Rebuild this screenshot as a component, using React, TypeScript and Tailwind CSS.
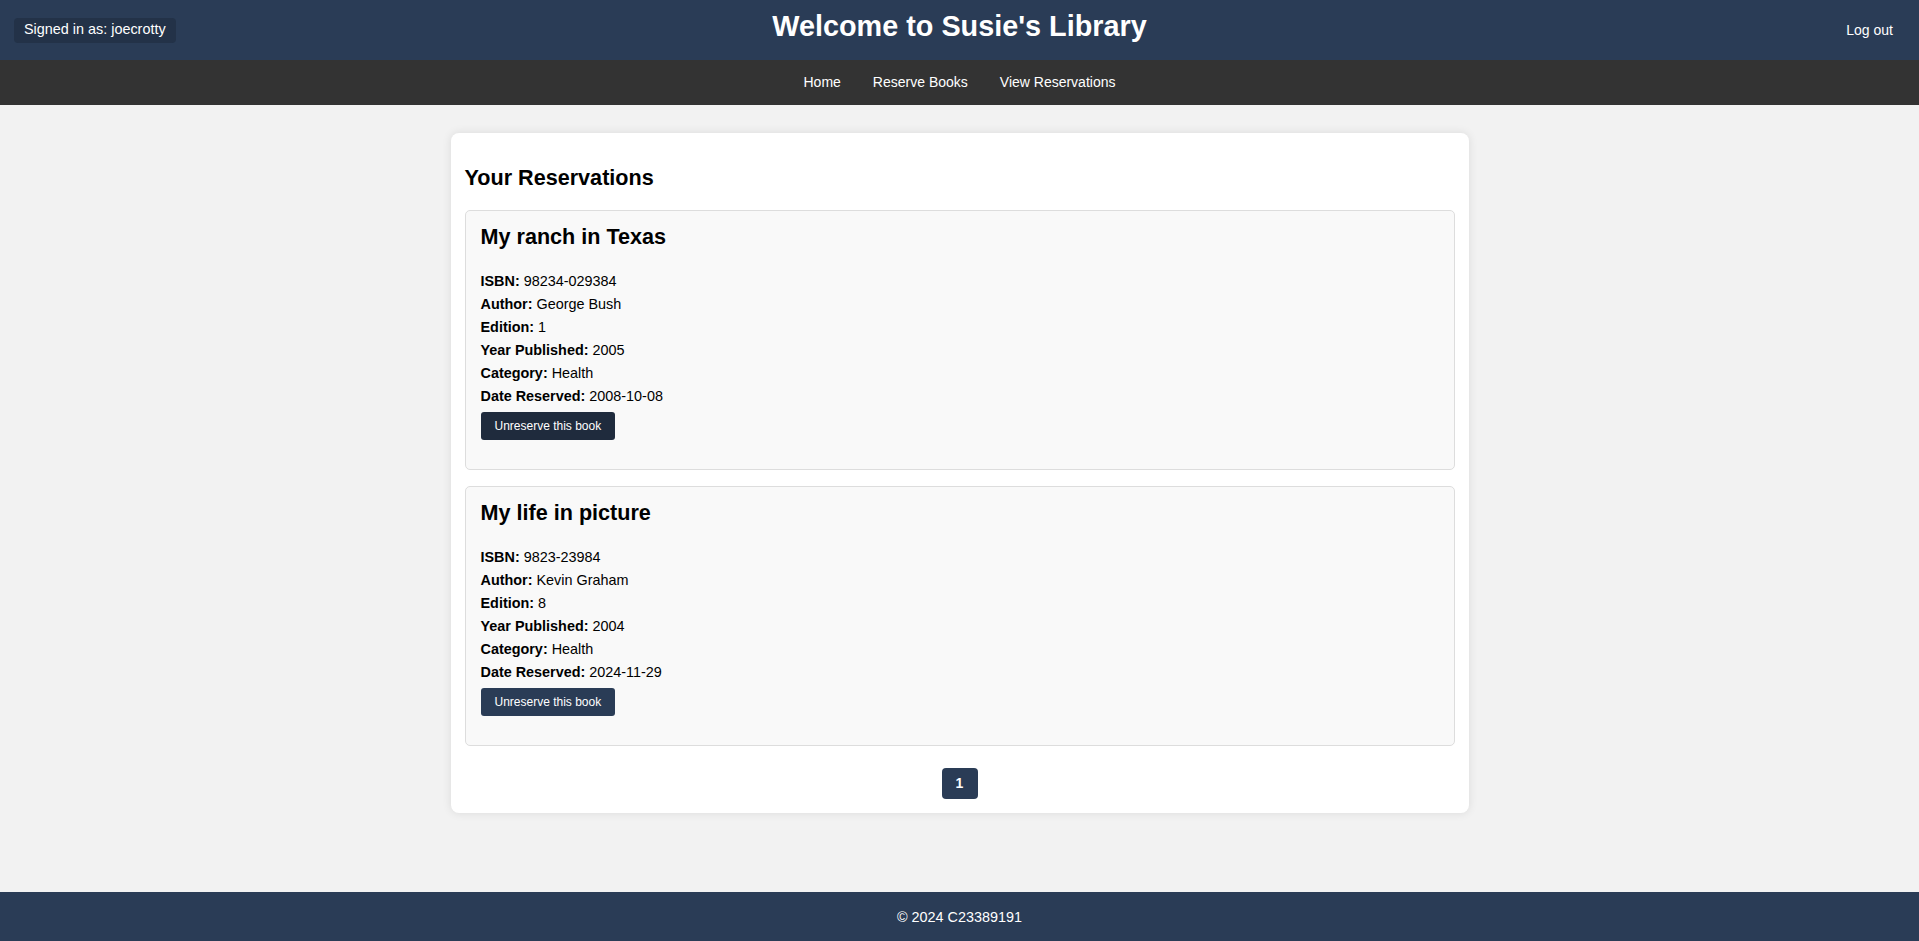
import React from "react";

type Book = {
  title: string;
  isbn: string;
  author: string;
  edition: string;
  year: string;
  category: string;
  reserved: string;
};

const books: Book[] = [
  {
    title: "My ranch in Texas",
    isbn: "98234-029384",
    author: "George Bush",
    edition: "1",
    year: "2005",
    category: "Health",
    reserved: "2008-10-08",
  },
  {
    title: "My life in picture",
    isbn: "9823-23984",
    author: "Kevin Graham",
    edition: "8",
    year: "2004",
    category: "Health",
    reserved: "2024-11-29",
  },
];

function Line({ label, value }: { label: string; value: string }) {
  return (
    <p className="leading-[23px] text-[14.4px] text-black">
      <span className="font-bold">{label}:</span> {value}
    </p>
  );
}

function BookCard({ book, dark }: { book: Book; dark?: boolean }) {
  return (
    <div className="border border-[#dddddd] rounded-[5px] bg-[#f9f9f9] pt-[13px] px-[15px] pb-[29px]">
      <h3 className="text-[21.6px] font-bold leading-[25px] mb-[21px] text-black">{book.title}</h3>
      <Line label="ISBN" value={book.isbn} />
      <Line label="Author" value={book.author} />
      <Line label="Edition" value={book.edition} />
      <Line label="Year Published" value={book.year} />
      <Line label="Category" value={book.category} />
      <Line label="Date Reserved" value={book.reserved} />
      <button
        className={
          "mt-[4px] h-[28px] px-[14px] rounded-[3px] text-white text-[12px] leading-none " +
          (dark ? "bg-[#1f2b3d]" : "bg-[#2a3c56]")
        }
      >
        Unreserve this book
      </button>
    </div>
  );
}

export default function App() {
  return (
    <div
      className="min-h-screen flex flex-col bg-[#f2f2f2]"
      style={{ fontFamily: '"Liberation Sans", Arial, sans-serif' }}
    >
      <header className="h-[60px] bg-[#2a3c56] text-white grid grid-cols-[1fr_auto_1fr] items-center px-[14px]">
        <div className="flex">
          <span className="bg-[#233248] rounded-[4px] h-[25px] px-[10px] flex items-center text-[14.4px]">
            Signed in as: joecrotty
          </span>
        </div>
        <h1 className="text-[28.8px] font-bold leading-none pb-[7px]">Welcome to Susie's Library</h1>
        <div className="flex justify-end pr-[12px]">
          <a className="text-[14px] cursor-pointer">Log out</a>
        </div>
      </header>
      <nav className="h-[45px] bg-[#333333] flex items-center justify-center text-white text-[14px]">
        <a className="mx-4 cursor-pointer">Home</a>
        <a className="mx-4 cursor-pointer">Reserve Books</a>
        <a className="mx-4 cursor-pointer">View Reservations</a>
      </nav>
      <main className="flex-1 pt-[28px]">
        <div className="w-[1018px] mx-auto bg-white rounded-[8px] shadow-[0_0_10px_rgba(0,0,0,0.1)] px-[14px] pt-[15px] pb-[14px]">
          <h2 className="text-[21.6px] font-bold leading-[25px] mt-[17px] mb-5 text-black">Your Reservations</h2>
          <div className="flex flex-col gap-4">
            <BookCard book={books[0]} dark />
            <BookCard book={books[1]} />
          </div>
          <div className="flex justify-center mt-[22px]">
            <span className="w-[36px] h-[31px] rounded-[4px] bg-[#2a3c56] text-white font-bold text-[14px] flex items-center justify-center">
              1
            </span>
          </div>
        </div>
      </main>
      <footer className="h-[49px] bg-[#2a3c56] text-white text-[14.4px] flex items-center justify-center pt-[3px]">
        © 2024 C23389191
      </footer>
    </div>
  );
}
